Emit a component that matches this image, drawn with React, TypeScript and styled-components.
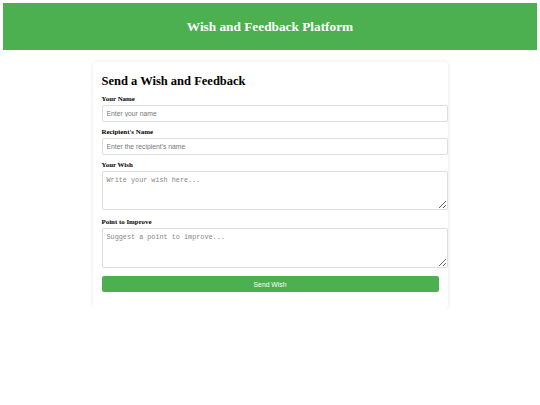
import React from 'react';
import styled, { createGlobalStyle } from 'styled-components';

const GlobalStyle = createGlobalStyle`
  body {
    margin: 3px;
    font-family: "Liberation Serif", "Times New Roman", serif;
    background: #fff;
  }
`;

const Header = styled.header`
  height: 47px;
  background: #4caf50;
  display: flex;
  align-items: center;
  justify-content: center;
`;

const HeaderTitle = styled.h1`
  margin: 0;
  color: #fff;
  font-size: 13.3px;
  font-weight: bold;
`;

const Card = styled.form`
  width: 355px;
  box-sizing: border-box;
  margin: 12px auto 0;
  padding: 9px 9px 17px;
  background: #fff;
  border-radius: 4px;
  box-shadow: 0 0 4px rgba(0, 0, 0, 0.1);
  display: flex;
  flex-direction: column;
`;

const Heading = styled.h2`
  margin: 0 0 3px;
  font-size: 12.5px;
  line-height: 20px;
  font-weight: bold;
  color: #000;
`;

const Field = styled.div<{ $gap?: number }>`
  display: flex;
  flex-direction: column;
  margin-bottom: ${p => p.$gap ?? 5}px;
`;

const Label = styled.label`
  font-size: 6.9px;
  line-height: 10px;
  font-weight: bold;
  color: #000;
  margin-bottom: 1px;
  padding-top: 1px;
  margin-top: -1px;
`;

const Input = styled.input`
  box-sizing: border-box;
  width: calc(100% + 9px);
  height: 17px;
  margin: 0;
  padding: 0 4px;
  border: 1px solid #ddd;
  border-radius: 2px;
  font-family: "Liberation Sans", Arial, sans-serif;
  font-size: 6.8px;
  outline: none;
  &::placeholder {
    color: #777;
  }
`;

const TextArea = styled.textarea<{ $rows?: number }>`
  box-sizing: border-box;
  width: calc(100% + 9px);
  height: ${p => p.$rows ?? 40}px;
  margin: 0;
  padding: 4px;
  border: 1px solid #ddd;
  border-radius: 2px;
  font-family: "Liberation Mono", "Courier New", monospace;
  font-size: 6.8px;
  outline: none;
  &::placeholder {
    color: #888;
  }
`;

const SubmitButton = styled.button`
  margin-top: 3px;
  height: 16px;
  border: none;
  border-radius: 2px;
  background: #4caf50;
  color: #fff;
  font-family: "Liberation Sans", Arial, sans-serif;
  font-size: 6.8px;
  cursor: pointer;
`;

export default function App() {
  return (
    <>
      <GlobalStyle />
      <Header>
        <HeaderTitle>Wish and Feedback Platform</HeaderTitle>
      </Header>
      <Card onSubmit={e => e.preventDefault()}>
        <Heading>Send a Wish and Feedback</Heading>
        <Field>
          <Label>Your Name</Label>
          <Input placeholder="Enter your name" />
        </Field>
        <Field>
          <Label>Recipient's Name</Label>
          <Input placeholder="Enter the recipient's name" />
        </Field>
        <Field $gap={7}>
          <Label>Your Wish</Label>
          <TextArea $rows={39} placeholder="Write your wish here..." />
        </Field>
        <Field>
          <Label>Point to Improve</Label>
          <TextArea $rows={40} placeholder="Suggest a point to improve..." />
        </Field>
        <SubmitButton type="submit">Send Wish</SubmitButton>
      </Card>
    </>
  );
}
